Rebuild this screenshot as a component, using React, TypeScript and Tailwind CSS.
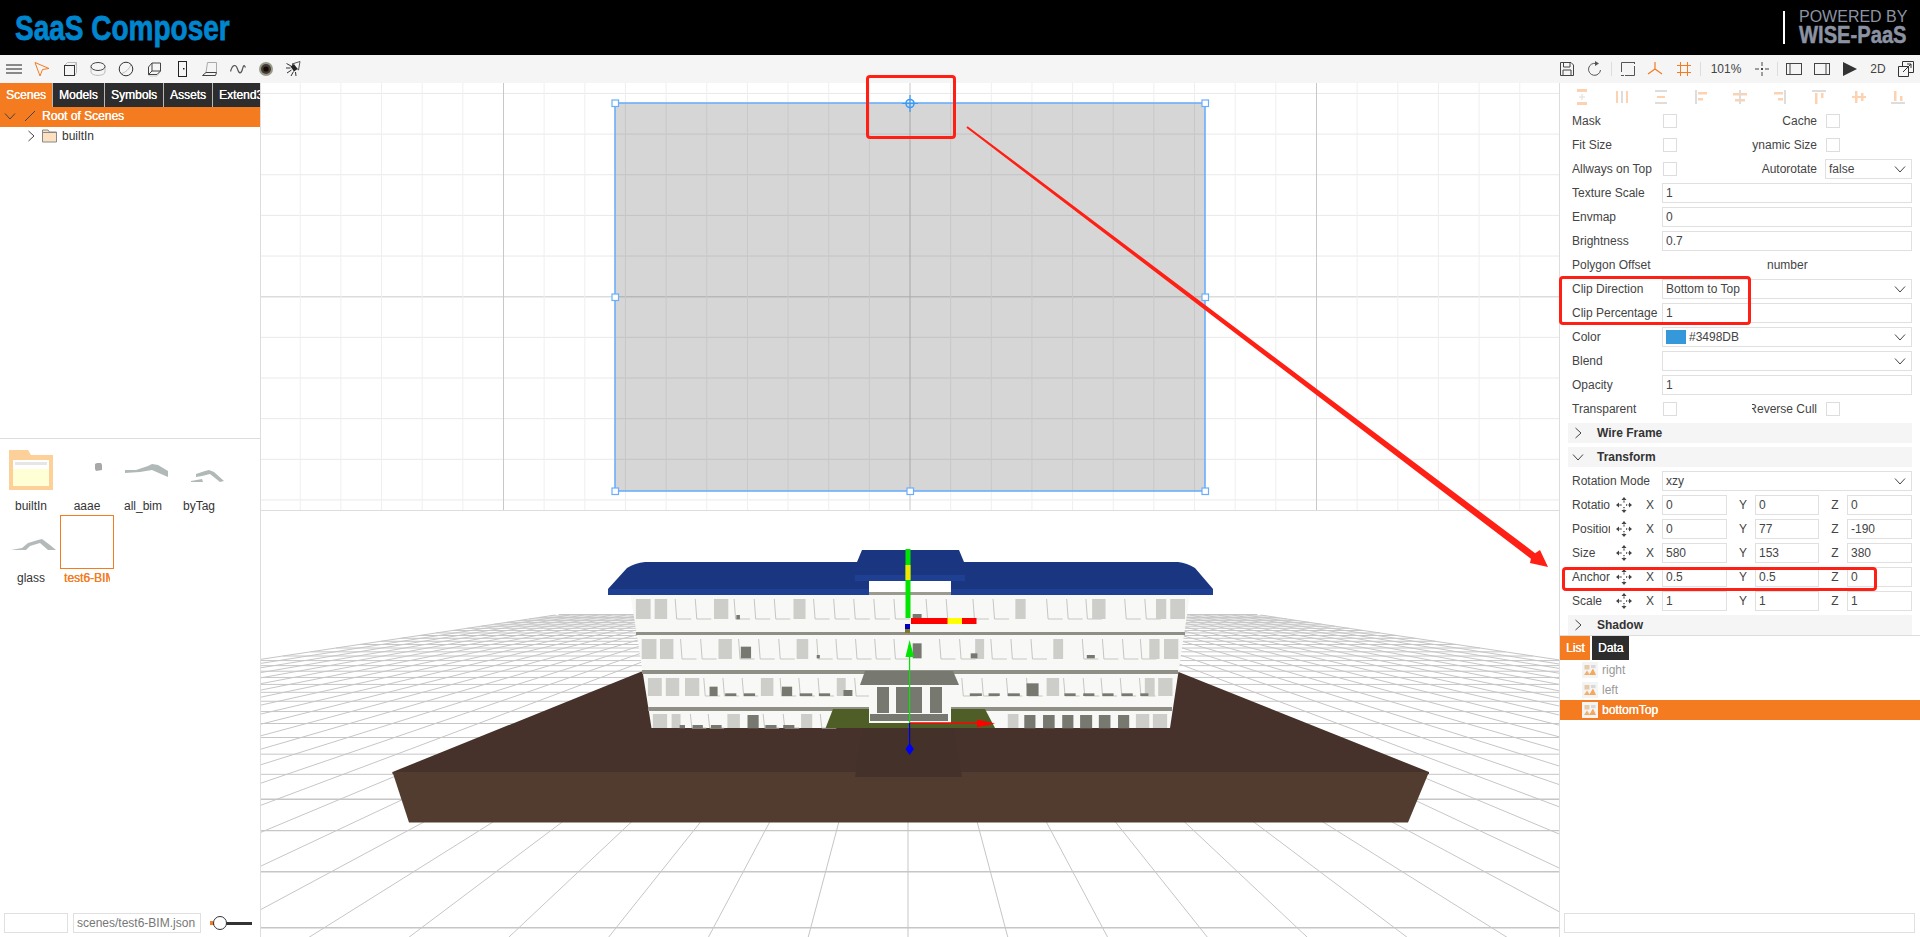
import React from 'react';

const ORANGE = '#f47b20';

const Chevron = ({ dir = 'right', className = '' }: { dir?: 'right' | 'down'; className?: string }) => (
  <svg width="12" height="12" viewBox="0 0 12 12" fill="none" stroke="#444" strokeWidth="1" className={className}>
    {dir === 'right' ? <path d="M3.5 1 L9 6 L3.5 11" /> : <path d="M1 3.5 L6 9 L11 3.5" />}
  </svg>
);

const Ico = ({ children }: { children: React.ReactNode }) => (
  <svg width="16" height="16" viewBox="0 0 16 16" fill="none" strokeWidth="1">
    {children}
  </svg>
);

const leftTools: React.ReactNode[] = [
  <Ico><path d="M0 4 H16 M0 8 H16 M0 12 H16" stroke="#666" strokeWidth="1.4" /></Ico>,
  <Ico><path d="M1 1.5 L15 7.5 L8.5 8.5 L6 15 Z" stroke={ORANGE} /></Ico>,
  <Ico><path d="M2.5 4.5 L5.5 1.5 H14.5 V11.5 L12.5 14.5 M12.5 4.5 L14.5 1.5" stroke="#bbb" /><rect x="2.5" y="4.5" width="10" height="10" stroke="#333" /></Ico>,
  <Ico><path d="M1 5.5 V11 C1 15.5 15 15.5 15 11 V5.5" stroke="#bbb" /><ellipse cx="8" cy="5.5" rx="7" ry="4" stroke="#444" /></Ico>,
  <Ico><path d="M3.5 12.5 C7.5 11.5 11.5 8 13 3.5" stroke="#bbb" /><circle cx="8" cy="8" r="6.8" stroke="#333" /></Ico>,
  <Ico><path d="M2.5 14.5 L5 15 H11 L14 11" stroke="#ccc" /><path d="M2.5 13.5 V6 L6 2 H14.5 V10 L11 13.5 Z M6 2 V10 H14.5 M2.5 13.5 L6 10" stroke="#444" /></Ico>,
  <Ico><rect x="4.5" y="0.5" width="8" height="15" stroke="#222" /><rect x="9" y="7" width="1.5" height="1.5" fill="#222" /></Ico>,
  <Ico><path d="M4 11.5 L5.5 1.5 H14.5 V11.5" stroke="#aaa" /><path d="M0.5 14.5 L4 11.5 H14.5 L13.5 14.5 Z" stroke="#444" /></Ico>,
  <Ico><path d="M0.5 10.5 C2.5 3 6 3 7.5 8 S11 13.5 12.5 8 S14.5 5 15.5 6.5" stroke="#555" strokeWidth="1.2" /></Ico>,
  <Ico><circle cx="8" cy="8" r="7" fill="#9a9a88" /><circle cx="8" cy="8" r="5" fill="#3e3e34" /><circle cx="8" cy="8" r="2.6" fill="#1c0505" /></Ico>,
  <Ico><path d="M6 3 L14 0.5 L12.5 9 Z" stroke="#555" /><path d="M4.5 5.5 L8 3 L11.5 8 L8 10.5 Z" fill="#222" /><path d="M0.5 2.5 L5 5 M0 7 H4.5 M1 12 L5.5 9 M5 15 L7.5 10.5 M10 15 L9.5 11" stroke="#333" /></Ico>,
];

const MoveIcon = () => (
  <svg width="16" height="16" viewBox="0 0 16 16" fill="#444">
    <path d="M8 0 L10.5 3 H5.5 Z M8 16 L10.5 13 H5.5 Z M0 8 L3 5.5 V10.5 Z M16 8 L13 5.5 V10.5 Z" />
    <path d="M8 3.5 V6 M8 10 V12.5 M3.5 8 H6 M10 8 H12.5" stroke="#444" strokeWidth="1.3" strokeDasharray="1.2 0.8" />
  </svg>
);

type Bar = [number, number, number, number, string];
const P = '#fdd2b0';
const G = '#dddddd';
const alignIcons: Bar[][] = [
  [[3, 0, 10, 3, P], [3, 13, 10, 3, P], [5, 7.5, 6, 1, G], [7.5, 5, 1, 6, G]],
  [[2, 2, 2, 12, P], [7, 2, 2, 12, G], [12, 2, 2, 12, P]],
  [[2, 1, 12, 2, G], [4, 7, 8, 2, P], [2, 13, 12, 2, G]],
  [[2, 1, 2, 14, G], [5, 3, 9, 2.5, P], [5, 9, 5, 2.5, P]],
  [[1, 4, 14, 2.5, P], [3, 10, 10, 2.5, P], [7, 1, 2, 14, G]],
  [[12, 1, 2, 14, G], [2, 3, 9, 2.5, P], [6, 9, 5, 2.5, P]],
  [[1, 1, 14, 2, G], [4, 4, 2.5, 11, P], [10, 4, 2.5, 5, P]],
  [[4, 2, 2.5, 12, P], [10, 4, 2.5, 8, P], [1, 7, 14, 2, P]],
  [[1, 13, 14, 2, G], [4, 2, 2.5, 10, P], [10, 7, 2.5, 5, P]],
];

const Input = ({ value, className = 'flex-1' }: { value: string; className?: string }) => (
  <input
    readOnly
    value={value}
    className={`h-5 min-w-0 border border-[#e0e0e0] bg-white px-[3px] text-xs text-[#444] outline-none ${className}`}
  />
);

const Check = () => <span className="block h-[14px] w-[14px] shrink-0 border border-[#ddd] bg-white" />;

const Select = ({ value, className = 'flex-1' }: { value?: React.ReactNode; className?: string }) => (
  <div className={`flex h-5 min-w-0 items-center justify-between border border-[#e0e0e0] bg-white pl-[3px] pr-[5px] text-xs text-[#444] ${className}`}>
    <span className="flex items-center">{value}</span>
    <Chevron dir="down" />
  </div>
);

const Row = ({ label, children }: { label: string; children?: React.ReactNode }) => (
  <div className="flex h-6 items-center">
    <span className="w-[90px] shrink-0 overflow-hidden whitespace-nowrap">{label}</span>
    {children}
  </div>
);

const CheckRow = ({ label, label2, children }: { label: string; label2: string; children?: React.ReactNode }) => (
  <div className="flex h-6 items-center">
    <span className="w-[91px] shrink-0 whitespace-nowrap">{label}</span>
    <Check />
    <span className="ml-[75px] flex w-[65px] shrink-0 justify-end overflow-hidden whitespace-nowrap">{label2}</span>
    {children ?? (
      <span className="ml-[9px]">
        <Check />
      </span>
    )}
  </div>
);

const Section = ({ title, open }: { title: string; open?: boolean }) => (
  <div className="flex h-6 items-center">
    <div className="-ml-1 flex h-5 flex-1 items-center bg-[#f5f5f5] pl-1">
      <Chevron dir={open ? 'down' : 'right'} />
      <span className="ml-[13px] font-bold text-[#333]">{title}</span>
    </div>
  </div>
);

const Xyz = ({ label, x, y, z }: { label: string; x: string; y: string; z: string }) => (
  <div className="flex h-6 items-center">
    <span className="w-[38px] shrink-0 overflow-hidden whitespace-nowrap">{label}</span>
    <span className="flex w-7 justify-center">
      <MoveIcon />
    </span>
    <span className="w-6 text-center">X</span>
    <Input value={x} className="w-[65px]" />
    <span className="w-7 pl-1 text-center">Y</span>
    <Input value={y} className="w-[64px]" />
    <span className="w-7 pl-1 text-center">Z</span>
    <Input value={z} className="w-[65px]" />
  </div>
);

const tabs = [
  { name: 'Scenes', w: 'w-[52px]', active: true },
  { name: 'Models', w: 'w-[51px]' },
  { name: 'Symbols', w: 'w-[58px]' },
  { name: 'Assets', w: 'w-[48px]' },
  { name: 'Extend3D', w: 'w-[47px]' },
];

const thin = '[text-shadow:0.3px_0_0_currentColor]';

const blobs: Record<string, React.ReactNode> = {
  aaae: <path d="M35 21 L37 20 L41 20 L42 22 L42 27 L36 28 L35 26 Z" fill="#a8a8a8" />,
  all_bim: <path d="M9 27 L20 27 L32 23 L36 21 L42 22 L52 28 L52 34 L45 31 L36 27 L24 29 L9 30 Z" fill="#b0b8b8" />,
  byTag: <path d="M24 31 L33 28 L37 27 L42 29 L52 38 L48 39 L38 31 L30 33 L24 34 Z M19 38 L30 36 L31 39 L19 39 Z" fill="#b0b8b8" />,
  glass: <path d="M7 35 L18 33 L24 28 L34 25 L38 24 L46 30 L52 35 L44 35 L36 28 L26 31 L22 35 Z" fill="#b4baba" />,
};

const thumbs = ['builtIn', 'aaae', 'all_bim', 'byTag', 'glass', 'test6-BIM'];

const Thumb = ({ name }: { name: string }) => {
  const selected = name === 'test6-BIM';
  return (
    <div className="h-[72px] w-[54px]">
      <div className={`h-[54px] w-[54px] ${selected ? 'border border-[#f47b20]' : ''}`}>
        {!selected && (
          <svg width="54" height="54" viewBox="0 0 54 54">
            {name === 'builtIn' ? (
              <>
                <path d="M5 7 H24 L27 12 H49 V47 H5 Z" fill="#fdd09a" />
                <rect x="9" y="17" width="36" height="26" fill="#fff" />
                <rect x="11" y="19" width="32" height="3" fill="#e6e6e6" />
                <rect x="9" y="26" width="36" height="17" fill="#ffffd6" />
              </>
            ) : (
              blobs[name]
            )}
          </svg>
        )}
      </div>
      <div className={`mx-1 h-[18px] overflow-hidden whitespace-nowrap text-center leading-[19px] ${selected ? `text-[#f47b20] ${thin}` : 'text-[#333]'}`}>
        {name}
      </div>
    </div>
  );
};

const hLines = Array.from({ length: 11 }, (_, i) => 296.7 + (i - 5) * 40.65);
const vLines = Array.from({ length: 33 }, (_, i) => 910 + (i - 16) * 40.65);

const Handle = ({ x, y }: { x: number; y: number }) => (
  <rect x={x - 3} y={y - 3} width="6.5" height="6.5" fill="#fff" stroke="#6aaefb" strokeWidth="1.2" />
);

const Plan = () => (
  <svg className="block h-full w-full" viewBox="261 83 1298 427">
    {hLines.map((y, i) => (
      <line key={i} x1="261" x2="1559" y1={y} y2={y} stroke={i === 5 ? '#dcdcdc' : '#e9e9e9'} strokeWidth={i === 5 ? 1.5 : 1} />
    ))}
    {vLines.map((x, i) => (
      <line key={i} x1={x} x2={x} y1="83" y2="510" stroke={(i - 16) % 10 === 0 ? '#c8c8c8' : '#efefef'} />
    ))}
    <rect x="615" y="103" width="590" height="388" fill="#000" fillOpacity="0.16" stroke="#6aaefb" strokeWidth="1.6" />
    <Handle x={615} y={103} />
    <Handle x={1205} y={103} />
    <Handle x={615} y={297} />
    <Handle x={1205} y={297} />
    <Handle x={615} y={491} />
    <Handle x={910} y={491} />
    <Handle x={1205} y={491} />
    <circle cx="910" cy="103.5" r="4" fill="none" stroke="#3b9af5" strokeWidth="1.6" />
    <path d="M902 103.5 H918 M910 95 V112" stroke="#3b9af5" strokeWidth="1.2" />
  </svg>
);

// x values below are measured at 2.24x from the building's crop origin
const zx = (v: number) => 560 + v / 2.24;

type Win = { y0: number; y1: number; gray: number[][]; line: number[]; dark: number[][] };
const windows: Win[] = [
  {
    y0: 599, y1: 619,
    gray: [[170, 203], [212, 240], [345, 377], [523, 550], [1020, 1043], [1192, 1222], [1335, 1358], [1367, 1400]],
    line: [258, 303, 390, 435, 480, 568, 613, 658, 703, 748, 820, 865, 925, 970, 1090, 1135, 1178, 1265, 1310],
    dark: [[395, 403, 255, 268], [790, 810, 252, 265]],
  },
  {
    y0: 639, y1: 659,
    gray: [[183, 216], [224, 254], [355, 385], [530, 556], [930, 950], [1105, 1127], [1320, 1343], [1353, 1385]],
    line: [270, 315, 400, 445, 490, 575, 618, 662, 705, 748, 850, 895, 965, 1010, 1055, 1170, 1215, 1260, 1300],
    dark: [[405, 428, 350, 385], [790, 810, 340, 385], [920, 935, 370, 385], [1180, 1198, 375, 385], [575, 582, 375, 385]],
  },
  {
    y0: 678, y1: 696,
    gray: [[197, 228], [237, 267], [280, 312], [450, 478], [620, 640], [1090, 1118], [1310, 1332], [1340, 1372]],
    line: [322, 365, 408, 493, 535, 578, 660, 900, 945, 1000, 1045, 1128, 1172, 1212, 1255, 1298],
    dark: [[335, 353, 470, 498], [370, 395, 490, 498], [412, 437, 490, 498], [497, 520, 470, 498], [537, 565, 490, 498], [580, 605, 490, 498], [635, 655, 480, 498], [918, 945, 490, 498], [960, 985, 490, 498], [1003, 1030, 490, 498], [1045, 1072, 460, 498], [1130, 1155, 490, 498], [1172, 1197, 490, 498], [1215, 1240, 490, 498], [1258, 1283, 490, 498], [1300, 1318, 490, 498]],
  },
  {
    y0: 714, y1: 728,
    gray: [[208, 240], [250, 270], [375, 403], [540, 565], [1003, 1027], [1290, 1320], [1328, 1360]],
    line: [292, 332, 455, 500, 583],
    dark: [[268, 280, 585, 595], [297, 320, 585, 595], [338, 362, 585, 595], [420, 445, 555, 595], [460, 485, 585, 595], [500, 525, 585, 595], [1040, 1065, 555, 595], [1082, 1108, 555, 595], [1125, 1150, 555, 595], [1165, 1192, 555, 595], [1207, 1233, 555, 595], [1250, 1275, 555, 595]],
  },
];

const VPX = 908;
const VPY = 562;
const floorRows = Array.from({ length: 34 }, (_, i) => VPY + 1 / (0.002734 + 0.000494 * i));
const floorCols = Array.from({ length: 51 }, (_, i) => i - 25);

const Perspective = () => (
  <svg className="block h-full w-full" viewBox="261 511 1298 426">
    {/* floor */}
    {floorRows.map((y, i) => {
      const half = 25 * 0.266 * (y - VPY);
      return <line key={i} x1={VPX - half} x2={VPX + half} y1={y} y2={y} stroke="#c6c6c6" strokeWidth={i < 4 ? 1.4 : 1} />;
    })}
    {floorCols.map((k) => (
      <line
        key={k}
        x1={VPX + k * 0.266 * (615 - VPY)}
        y1="615"
        x2={VPX + k * 0.266 * (1000 - VPY)}
        y2="1000"
        stroke="#c6c6c6"
      />
    ))}
    {/* base */}
    <polygon points="392.5,772 641,671.7 1178,671.7 1429,772 1429,774 392.5,774" fill="#46322a" />
    <polygon points="392.5,772 1429,772 1408,822.5 409,822.5" fill="#523c30" />
    <polygon points="863,728 953,728 962,777 855,777" fill="#44312a" />
    {/* building */}
    <polygon points="630.5,595 1190,595 1170,728 651.5,728" fill="#f8f8f6" />
    <polygon points="636,632 1185,632 1185,635 636,635" fill="#8f8f86" />
    <polygon points="642,670 1178,670 1178,674 642,674" fill="#8f8f86" />
    <polygon points="648,707 1172,707 1172,711 648,711" fill="#8f8f86" />
    {windows.map((row, r) => (
      <g key={r}>
        {row.line.map((v, i) => (
          <path key={i} d={`M${zx(v)} ${row.y0} L${zx(v) + 1.5} ${row.y1} H${zx(v) + 16}`} fill="none" stroke="#c6c6c2" />
        ))}
        {row.gray.map((g, i) => (
          <rect key={i} x={zx(g[0])} y={row.y0} width={(g[1] - g[0]) / 2.24} height={row.y1 - row.y0} fill="#cdcdc9" />
        ))}
        {row.dark.map((d, i) => (
          <rect key={i} x={zx(d[0])} y={530 + d[2] / 3} width={(d[1] - d[0]) / 2.24} height={(d[3] - d[2]) / 3} fill="#777870" />
        ))}
      </g>
    ))}
    {/* lawn + entrance */}
    <polygon points="833,709 985,709 995,728 825.6,728" fill="#4f5e27" />
    <rect x="869" y="685" width="82" height="38" fill="#f8f8f6" />
    <rect x="877" y="687" width="12" height="26" fill="#777870" />
    <rect x="896" y="687" width="26" height="26" fill="#777870" />
    <rect x="930" y="687" width="12" height="26" fill="#777870" />
    <rect x="870" y="714" width="78" height="7" fill="#777870" />
    <polygon points="865,671 953,671 959,685 860,685" fill="#777870" />
    {/* roof */}
    <path d="M608 589 L627 568 Q635 563 645 562 H857 L862 550 H959 L964 562 H1178 Q1187 563 1195 568 L1213 589 V595 H951 V581 H869 V595 H608 Z" fill="#1b3681" />
    <rect x="608" y="589" width="261" height="6" fill="#1f3f92" />
    <rect x="951" y="589" width="262" height="6" fill="#1f3f92" />
    <rect x="855" y="575" width="110" height="6" fill="#1f3f92" />
    <rect x="869" y="581" width="82" height="11" fill="#ffffff" />
    <rect x="869" y="592" width="82" height="3" fill="#9a9a90" />
    {/* gizmo */}
    <rect x="905.5" y="549" width="5" height="69" fill="#00e600" />
    <rect x="905.5" y="565" width="5" height="15" fill="#f0e800" />
    <rect x="911" y="618" width="65.5" height="6" fill="#ff0000" />
    <rect x="947.5" y="618" width="14.5" height="6" fill="#ffff00" />
    <rect x="905" y="624" width="5" height="5" fill="#0000c8" />
    <rect x="905" y="629" width="5" height="4" fill="#807820" />
    <path d="M909.6 657 V723" stroke="#00e600" strokeWidth="1.2" />
    <polygon points="909.6,640 914,657 905.5,657" fill="#00e600" />
    <path d="M910 723 H980" stroke="#ff0000" strokeWidth="1.4" />
    <polygon points="995,723.5 977,719.5 977,727.5" fill="#ff0000" />
    <path d="M909.6 723 V745" stroke="#0000e6" strokeWidth="1.2" />
    <polygon points="909.6,743 914,749 909.6,755 905.5,749" fill="#0000f0" />
  </svg>
);

const ListIcon = () => (
  <svg width="16" height="16" viewBox="0 0 16 16" className="shrink-0">
    <rect width="16" height="16" fill="#f4f4f4" />
    <rect x="2.5" y="3" width="5" height="4.5" fill="#e6c9a8" />
    <rect x="9" y="3" width="4.5" height="3" fill="#d8d8d8" />
    <path d="M2 13 L5 8.5 L8 13 Z" fill="#f0b070" />
    <path d="M7 13 L11 6.5 L14 13 Z" fill="#f2a860" />
  </svg>
);

const App: React.FC = () => {
  return (
    <div className="relative flex h-[937px] w-[1920px] flex-col overflow-hidden bg-white font-['Liberation_Sans',Arial,sans-serif] text-xs text-[#444]">
      {/* header */}
      <div className="flex h-[55px] shrink-0 items-center justify-between bg-black pl-[15px]">
        <div className="origin-left scale-x-[0.8] whitespace-nowrap text-[35px] font-bold leading-none text-[#0085cf] [-webkit-text-stroke:0.8px_#0085cf]">SaaS Composer</div>
        <div className="mr-[14px] flex h-[33px] items-center">
          <div className="mr-[14px] h-[33px] w-[2px] bg-white" />
          <div className="-mt-px w-[107px] text-[#8b93a3]">
            <div className="whitespace-nowrap text-[16px] leading-[15px]">POWERED BY</div>
            <div className="origin-left scale-x-[0.84] whitespace-nowrap text-[24px] font-bold leading-[21px] [-webkit-text-stroke:0.5px_#8b93a3]">WISE-PaaS</div>
          </div>
        </div>
      </div>

      {/* toolbar */}
      <div className="flex h-7 shrink-0 items-center justify-between bg-[#f5f5f5]">
        <div className="flex">
          {leftTools.map((t, i) => (
            <span key={i} className="flex h-7 w-7 items-center justify-center">
              {t}
            </span>
          ))}
        </div>
        <div className="flex items-center">
          <span className="flex w-7 justify-center"><Ico><path d="M1.5 1.5 H12 L14.5 4 V14.5 H1.5 Z M4.5 1.5 V6 H11 V1.5 M4 14.5 V9 H12 V14.5" stroke="#444" /></Ico></span>
          <span className="flex w-7 justify-center"><Ico><path d="M13.5 9 A6 6 0 1 1 9 2.5" stroke="#555" /><path d="M8 0 L12 2.5 L8 5 Z" fill="#555" /></Ico></span>
          <span className="mx-[2px] h-[14px] w-px bg-[#ddd]" />
          <span className="flex w-[27px] justify-center"><Ico><path d="M1.5 11 V1.5 H14.5 M14.5 5 V14.5 H5" stroke="#555" /><path d="M1 14.5 H4 M14.5 1 V3" stroke="#555" /></Ico></span>
          <span className="flex w-7 justify-center"><Ico><path d="M8 8 V1 M8 8 L1 13 M8 8 L15 13" stroke={ORANGE} strokeWidth="1.2" /></Ico></span>
          <span className="flex w-[29px] justify-center"><Ico><path d="M4.5 1 V15 M11.5 1 V15 M1 4.5 H15 M1 11.5 H15" stroke={ORANGE} /></Ico></span>
          <span className="mx-[2px] h-[14px] w-px bg-[#ddd]" />
          <span className="w-[46px] text-center text-xs text-[#444]">101%</span>
          <span className="flex w-[26px] justify-center"><Ico><path d="M8 1 V5 M8 11 V15 M1 8 H5 M11 8 H15" stroke="#444" /><rect x="7" y="7" width="2" height="2" fill="#444" /></Ico></span>
          <span className="mx-[2px] h-[14px] w-px bg-[#ddd]" />
          <span className="flex w-7 justify-center"><Ico><rect x="0.5" y="2.5" width="15" height="11" stroke="#444" /><path d="M4 2.5 V13.5" stroke="#444" /></Ico></span>
          <span className="flex w-7 justify-center"><Ico><rect x="0.5" y="2.5" width="15" height="11" stroke="#444" /><path d="M12 2.5 V13.5" stroke="#444" /></Ico></span>
          <span className="flex w-7 justify-center"><Ico><path d="M1 1 L15 8 L1 15 Z" fill="#333" /></Ico></span>
          <span className="w-7 text-center text-xs text-[#444]">2D</span>
          <span className="flex w-7 justify-center"><Ico><path d="M0.5 5.5 H10.5 V15.5 H0.5 Z M4.5 5 V0.5 H15.5 V11.5 H11 M5 11 L13 3 M9 3 H13 V7" stroke="#333" /></Ico></span>
        </div>
      </div>

      {/* body */}
      <div className="flex min-h-0 flex-1">
        {/* left */}
        <div className="flex w-[261px] shrink-0 flex-col border-r border-[#ddd]">
          <div className="flex h-6 shrink-0 gap-px bg-[#b8b8b8]">
            {tabs.map((t) => (
              <div key={t.name} className={`${t.w} overflow-hidden whitespace-nowrap pl-[6px] leading-6 text-white ${thin} ${t.active ? 'bg-[#f47b20]' : 'bg-[#2d2d2d]'}`}>
                {t.name}
              </div>
            ))}
          </div>
          <div className="h-[332px] shrink-0 border-b border-[#ddd]">
            <div className={`flex h-5 items-center bg-[#f47b20] pb-[2px] pl-1 text-white ${thin}`}>
              <Chevron dir="down" />
              <svg width="12" height="12" viewBox="0 0 12 12" className="ml-[8px]">
                <path d="M1 11 L11 1" stroke="#444" />
              </svg>
              <span className="ml-[6px]">Root of Scenes</span>
            </div>
            <div className="flex h-5 items-center pb-[2px] pl-[25px] text-[#333]">
              <Chevron />
              <svg width="15" height="14" viewBox="0 0 15 14" className="ml-[5px]">
                <path d="M0.5 1 H6 L7.5 3 H14.5 V13 H0.5 Z" fill="#fde0c0" stroke="#888" />
                <path d="M0.5 3.5 H14.5" stroke="#888" />
              </svg>
              <span className="ml-[5px]">builtIn</span>
            </div>
          </div>
          <div className="flex flex-1 flex-wrap content-start gap-x-[2px] pl-1 pt-1">
            {thumbs.map((t) => (
              <Thumb key={t} name={t} />
            ))}
          </div>
          <div className="flex h-[24px] shrink-0 items-start pl-1">
            <input readOnly className="h-5 w-16 border border-[#e0e0e0] bg-white" />
            <input readOnly value="scenes/test6-BIM.json" className="ml-[5px] h-5 w-32 border border-[#e0e0e0] bg-white px-[3px] text-xs text-[#777] outline-none" />
            <div className="relative ml-[9px] flex h-5 w-[42px] items-center">
              <span className="h-1 w-[3px] bg-[#f47b20]" />
              <span className="h-[3px] flex-1 bg-[#333]" />
              <span className="absolute left-[3px] h-[14px] w-[14px] rounded-full border border-[#333] bg-white" />
            </div>
          </div>
        </div>

        {/* center */}
        <div className="flex min-w-0 flex-1 flex-col">
          <div className="h-[428px] shrink-0 border-b border-[#ddd]">
            <Plan />
          </div>
          <div className="min-h-0 flex-1">
            <Perspective />
          </div>
        </div>

        {/* right */}
        <div className="flex w-[361px] shrink-0 flex-col border-l border-[#ddd]">
          <div className="h-[553px] shrink-0 overflow-hidden border-b border-[#ddd] pl-3 pr-2 pt-[2px]">
            <div className="flex h-6 items-center justify-between pl-[2px] pr-[6px]">
              {alignIcons.map((bars, i) => (
                <svg key={i} width="16" height="16" viewBox="0 0 16 16">
                  {bars.map((b, j) => (
                    <rect key={j} x={b[0]} y={b[1]} width={b[2]} height={b[3]} fill={b[4]} />
                  ))}
                </svg>
              ))}
            </div>
            <CheckRow label="Mask" label2="Cache" />
            <CheckRow label="Fit Size" label2="Dynamic Size" />
            <CheckRow label="Allways on Top" label2="Autorotate">
              <Select value="false" className="ml-2 flex-1" />
            </CheckRow>
            <Row label="Texture Scale"><Input value="1" /></Row>
            <Row label="Envmap"><Input value="0" /></Row>
            <Row label="Brightness"><Input value="0.7" /></Row>
            <Row label="Polygon Offset"><span className="ml-[105px]">number</span></Row>
            <Row label="Clip Direction"><Select value="Bottom to Top" /></Row>
            <Row label="Clip Percentage"><Input value="1" /></Row>
            <Row label="Color">
              <Select
                value={
                  <>
                    <span className="mr-[3px] block h-[14px] w-5 bg-[#3498db]" />
                    #3498DB
                  </>
                }
              />
            </Row>
            <Row label="Blend"><Select /></Row>
            <Row label="Opacity"><Input value="1" /></Row>
            <CheckRow label="Transparent" label2="Reverse Cull" />
            <Section title="Wire Frame" />
            <Section title="Transform" open />
            <Row label="Rotation Mode"><Select value="xzy" /></Row>
            <Xyz label="Rotation" x="0" y="0" z="0" />
            <Xyz label="Position" x="0" y="77" z="-190" />
            <Xyz label="Size" x="580" y="153" z="380" />
            <Xyz label="Anchor" x="0.5" y="0.5" z="0" />
            <Xyz label="Scale" x="1" y="1" z="1" />
            <Section title="Shadow" />
          </div>
          <div className="flex h-6 shrink-0 gap-[2px] bg-white">
            <div className={`w-[30px] bg-[#f47b20] pl-[6px] leading-6 text-white ${thin}`}>List</div>
            <div className={`w-[37px] bg-[#2d2d2d] pl-[6px] leading-6 text-white ${thin}`}>Data</div>
          </div>
          <div className="flex-1">
            {['right', 'left', 'bottomTop'].map((n) => (
              <div key={n} className={`flex h-5 items-center pl-[22px] ${n === 'bottomTop' ? `bg-[#f47b20] text-white ${thin}` : 'text-[#999]'}`}>
                <ListIcon />
                <span className="ml-1">{n}</span>
              </div>
            ))}
          </div>
          <div className="h-6 shrink-0 pl-1 pr-1">
            <input readOnly className="h-5 w-[351px] border border-[#e0e0e0] bg-white" />
          </div>
        </div>
      </div>

      {/* annotations */}
      <div className="absolute left-[866px] top-[75px] h-[64px] w-[90px] rounded-sm border-[3px] border-[#ff2015]" />
      <div className="absolute left-[1559px] top-[276px] h-[49px] w-[192px] rounded-sm border-[3px] border-[#ff2015]" />
      <div className="absolute left-[1562px] top-[567px] h-[24px] w-[315px] rounded-sm border-[3px] border-[#ff2015]" />
      <svg className="pointer-events-none absolute left-0 top-0" width="1920" height="937">
        <polygon points="967.6,126.2 966.4,127.8 1530.9,558.8 1530,563 1548,567 1540,550 1535.1,553.2" fill="#ff2015" />
      </svg>
    </div>
  );
};

export default App;
